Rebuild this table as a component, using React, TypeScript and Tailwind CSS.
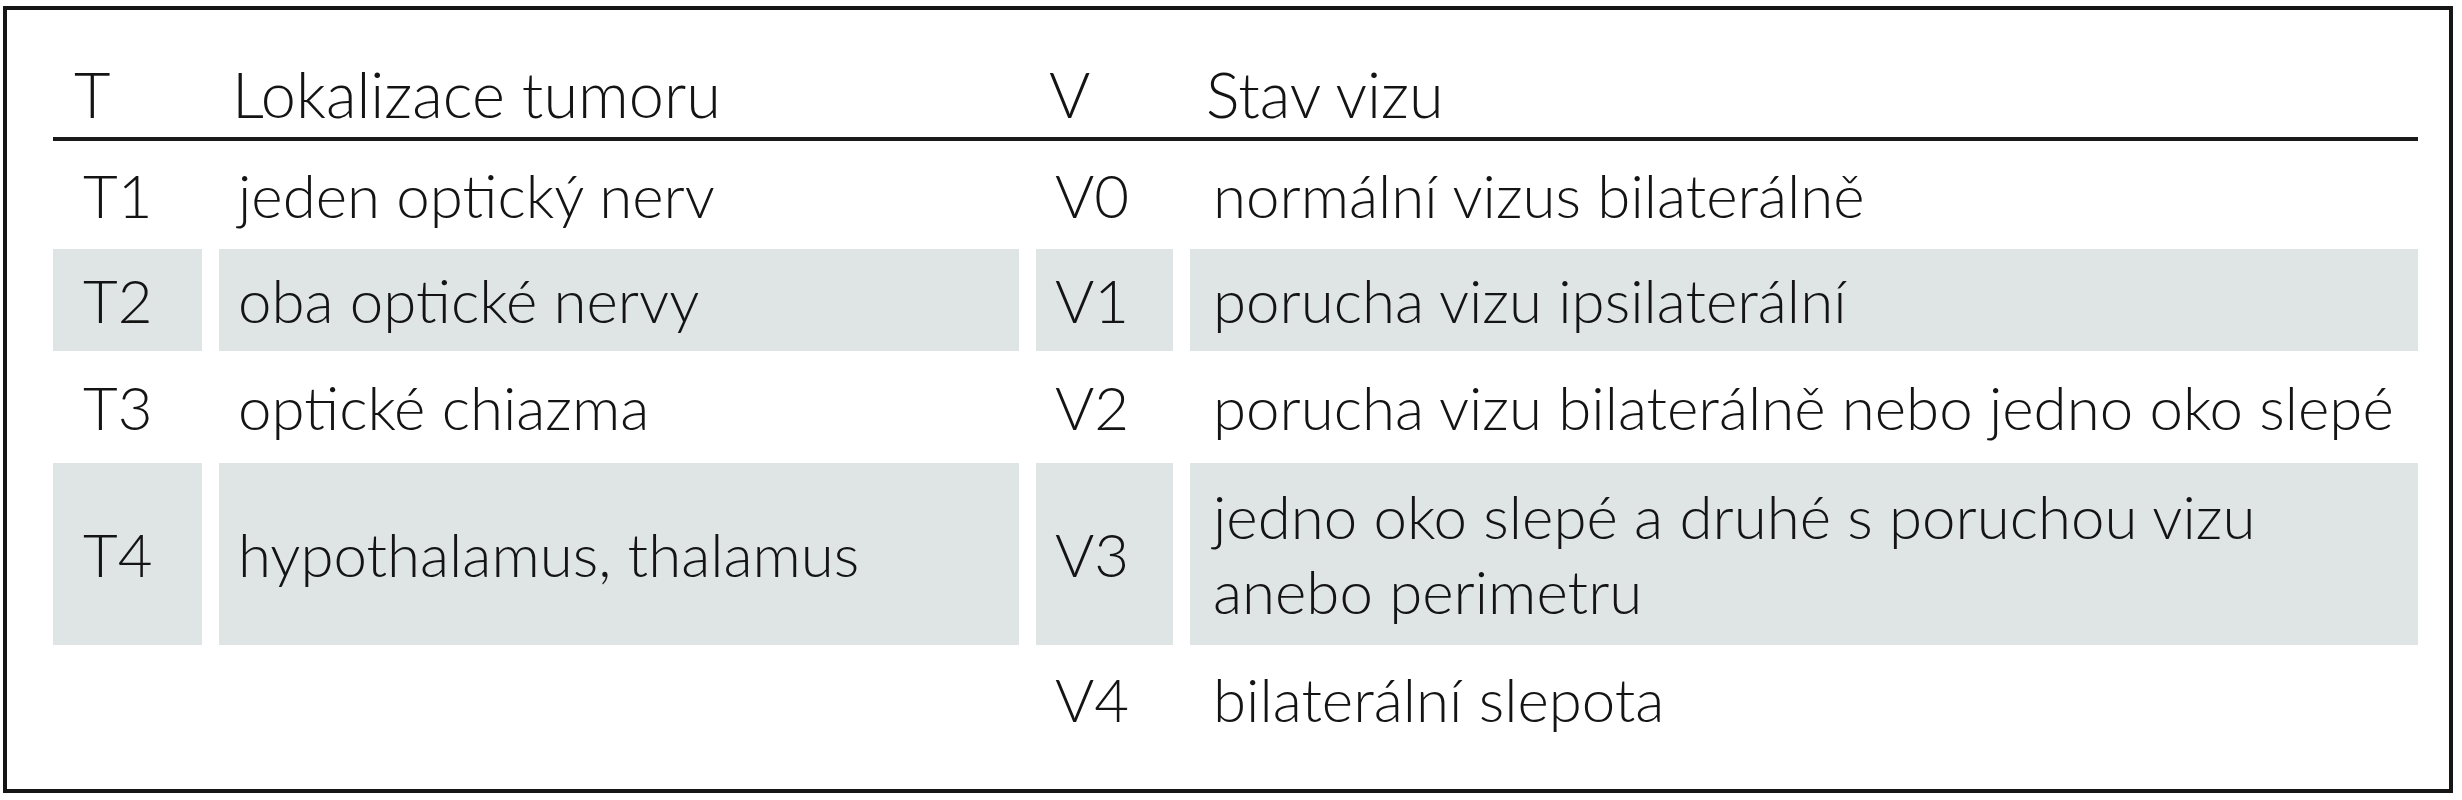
import React from "react";

type Row = {
  t: string;
  tl: string;
  v: string;
  vl: React.ReactNode;
  shaded: boolean;
};

const rows: Row[] = [
  { t: "T1", tl: "jeden optický nerv", v: "V0", vl: "normální vizus bilaterálně", shaded: false },
  { t: "T2", tl: "oba optické nervy", v: "V1", vl: "porucha vizu ipsilaterální", shaded: true },
  { t: "T3", tl: "optické chiazma", v: "V2", vl: "porucha vizu bilaterálně nebo jedno oko slepé", shaded: false },
  {
    t: "T4",
    tl: "hypothalamus, thalamus",
    v: "V3",
    vl: (
      <>
        jedno oko slepé a druhé s poruchou vizu
        <br />
        anebo perimetru
      </>
    ),
    shaded: true,
  },
  { t: "", tl: "", v: "V4", vl: "bilaterální slepota", shaded: false },
];

export default function App() {
  return (
    <div
      className="w-[2462px] h-[800px] bg-white pt-[6px] pl-[3px] text-[#141414] font-light"
      style={{ fontFamily: "Lato, 'Open Sans', sans-serif" }}
    >
      <div className="w-[2450px] h-[787px] border-4 border-[#161616] box-border pl-[46px] pr-[31px]">
        {/* header */}
        <div className="grid grid-cols-[149px_800px_137px_1fr] gap-x-[17px] h-[121px] box-content items-end pb-[6px] border-b-4 border-[#1a1a1a] text-[63px] leading-[75px]">
          <div className="pl-[21px]">T</div>
          <div className="pl-[13px]">Lokalizace tumoru</div>
          <div className="pl-[13px]">V</div>
          <div className="pl-[16px]">Stav vizu</div>
        </div>
        {/* body */}
        <div className="grid grid-cols-[149px_800px_137px_1fr] grid-rows-[108px_102px_112px_182px_108px] gap-x-[17px] text-[60px] leading-[75px]">
          {rows.map((r, i) => (
            <React.Fragment key={i}>
              <div className={`flex items-center pl-[30px] ${r.shaded ? "bg-[#dee5e4]" : ""}`}>{r.t}</div>
              <div className={`flex items-center pl-[19px] ${r.shaded ? "bg-[#dee5e4]" : ""}`}>{r.tl}</div>
              <div className={`flex items-center pl-[19px] ${r.shaded ? "bg-[#dee5e4]" : ""}`}>{r.v}</div>
              <div className={`flex items-center pl-[23px] whitespace-nowrap ${r.shaded ? "bg-[#dee5e4]" : ""}`}>
                <div>{r.vl}</div>
              </div>
            </React.Fragment>
          ))}
        </div>
      </div>
    </div>
  );
}
